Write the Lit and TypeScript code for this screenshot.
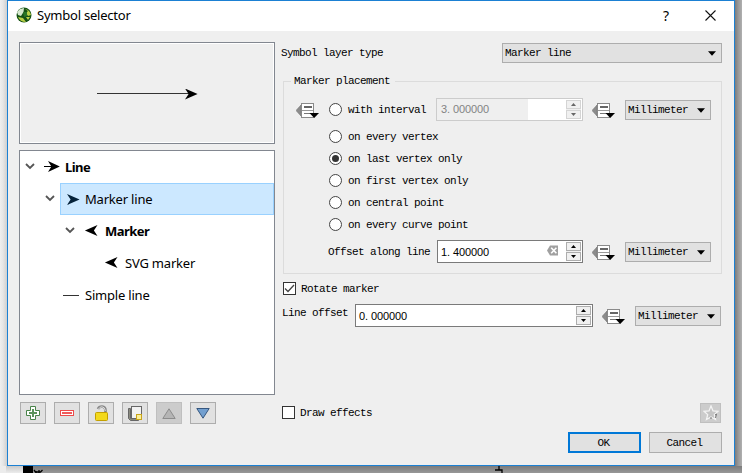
import { LitElement, html, css, svg } from "lit";
import { customElement } from "lit/decorators.js";

const arrowRight = svg`<path d="M0 0L12.6 5.5L0 11L3.6 5.5Z"/>`;
const overrideIcon = html`<svg class="ov" width="23" height="17" viewBox="0 0 23 17">
  <path d="M0 8.5L5 3V14Z" fill="#8c8c8c" stroke="#777" stroke-width=".6"/>
  <rect x="5.5" y="1.5" width="12" height="14" fill="#fff" stroke="#8a8a8a"/>
  <path d="M8 5h8" stroke="#666" stroke-width="2"/><path d="M6 8.5h11" stroke="#999"/><path d="M8 11.5h8" stroke="#777"/>
  <path d="M13.5 11H23L18.2 16Z" fill="#000"/></svg>`;
const caret = html`<svg class="caret" width="8" height="5" viewBox="0 0 8 5"><path d="M0 .3H8L4 4.7Z"/></svg>`;
const chevron = html`<svg class="chev" width="10" height="7" viewBox="0 0 10 7"><path d="M1 1L5 5L9 1" fill="none" stroke="#555" stroke-width="1.8"/></svg>`;
const unit = html`<div class="combo unit"><span>Millimeter</span>${caret}</div>`;
const spin = (value: string, cls: string, clear = false) => {
  const [whole, fraction] = value.split(".");
  return html`<div class="spin ${cls}">
  <span class="num">${whole}<span class="dot">.</span>${fraction}</span><span class="fill"></span>
  ${clear ? html`<svg class="clear" width="12" height="11" viewBox="0 0 12 11"><path d="M0 5.5L3 .5H11V10.5H3Z" fill="#a0a0a0"/><path d="M4.2 2.7L9.4 8.2M9.4 2.7L4.2 8.2" stroke="#fff" stroke-width="1.6"/></svg>` : ""}
  <span class="steps"><i><svg width="5" height="3"><path d="M0 3H5L2.5 0Z"/></svg></i><i><svg width="5" height="3"><path d="M0 0H5L2.5 3Z"/></svg></i></span></div>`;
};

@customElement("app-root")
export class AppRoot extends LitElement {
  static styles = css`
    :host { display: block; width: 742px; height: 473px; overflow: hidden; position: relative;
      background: linear-gradient(90deg, #efefef, #e6e6e6 3px, #cfcfcf 7px, #999 8px); font: 11px "Liberation Mono", monospace; color: #000; }
    * { box-sizing: border-box; }
    svg { display: block; flex: none; }
    .map { position: absolute; left: 0; top: 0; }
    .window { position: absolute; left: 7px; top: 0; width: 728px; height: 466px; border: 1px solid #1b80d3;
      background: #efefef; display: flex; flex-direction: column; }
    .title { height: 30px; background: #fff; display: flex; align-items: center; padding: 0 18px 2px 8px; flex: none;
      font: 13px "Noto Sans", sans-serif; }
    .title .name { margin-left: 5px; flex: 1; letter-spacing: -.22px; }
    .title .help { font-size: 14px; margin-right: 36px; }
    .body { flex: 1; display: flex; padding: 11px 12px 0 11px; }
    .left { width: 256px; flex: none; }
    .preview { height: 102px; border: 1px solid #828790; outline: 1px solid #fff; outline-offset: -2px; padding: 46px 0 0 77px; }
    .tree { height: 245px; margin-top: 6px; border: 1px solid #828790; background: #fff; font: 13px "Noto Sans", sans-serif; }
    .node { height: 32px; display: flex; align-items: center; }
    .node b, .node .n { white-space: nowrap; letter-spacing: -.2px; }
    .node b { letter-spacing: -.55px; }
    .chev { margin: 0 9px 0 5px; position: relative; top: -1px; }
    .node .glyph { margin-right: 5px; }
    .d1 { padding-left: 20px; } .d2 { padding-left: 40px; } .d3 { padding-left: 80px; } .ds { padding-left: 43px; }
    .item { height: 32px; flex: 1; display: flex; align-items: center; }
    .sel { background: #cce8ff; border: 1px solid #99d1ff; padding-left: 6px; margin-left: -4px; }
    .tools { display: flex; gap: 8px; margin: 7px 0 0 1px; }
    .tool { width: 26px; height: 22px; border: 1px solid #adadad; background: #e1e1e1; display: flex; align-items: center; justify-content: center; }
    .off { background: #ccc; border-color: #bfbfbf; }
    .right { flex: 1; margin-left: 6px; display: flex; flex-direction: column; }
    .t, .combo span, .legend { letter-spacing: -.6px; white-space: nowrap; }
    .row { display: flex; align-items: center; flex: none; }
    .combo { height: 20px; border: 1px solid #adadad; background: #e1e1e1; display: flex; align-items: center; justify-content: space-between; padding: 0 5px 0 2px; flex: none; }
    .type { height: 22px; justify-content: space-between; }
    .type .combo { width: 220px; }
    .unit { width: 86px; }
    .group { border: 1px solid #dcdcdc; height: 193px; width: 439px; margin: 17px 0 0 2px; flex: none; position: relative; padding: 16px 10px 0 12px; }
    .legend { position: absolute; left: 7px; top: -8px; background: #efefef; padding: 0 5px 0 3px; line-height: 15px; }
    .interval { height: 24px; }
    .ov { margin-right: 10px; }
    .radio { width: 13px; height: 13px; border: 1px solid #444; border-radius: 50%; background: #fff; display: grid; place-items: center; flex: none; margin: 0 6px 1px 0; }
    .radio.on::after { content: ""; width: 7px; height: 7px; border-radius: 50%; background: #333; }
    .opt { height: 22px; padding-left: 33px; }
    .opts { margin-top: 4px; }
    .spin { height: 23px; border: 1px solid #7a7a7a; background: #fff; display: flex; align-items: center; align-self: flex-start; flex: none; margin-right: 9px; padding: 1px; }
    .num { font: 11px "Liberation Sans", sans-serif; padding-left: 2px; white-space: nowrap; letter-spacing: -.12px; }
    .dot { letter-spacing: 2.9px; }
    .fill { flex: 1; }
    .clear { margin-right: 7px; position: relative; top: -1px; }
    .steps { width: 15px; height: 19px; display: flex; flex-direction: column; background: #efefef; gap: 1px; }
    .steps i { flex: 1; border: 1px solid #adadad; display: grid; place-items: center; background: #f0f0f0; }
    .w1 { width: 147px; border-color: #ccc; color: #838383; }
    .w1 .num { background: #efefef; height: 21px; line-height: 21px; width: 91px; margin-left: -1px; padding-left: 4px; }
    .w1 svg { fill: #666; } .w1 .steps i { border-color: #d4d4d4; }
    .w2 { width: 146px; } .w3 { width: 238px; }
    .offset { margin-top: 4px; padding-left: 32px; height: 24px; }
    .check { width: 13px; height: 13px; border: 1px solid #333; background: #fff; margin: 0 5px 1px 0; flex: none; }
    .rotate { height: 15px; margin: 7px 0 0 2px; }
    .line { height: 24px; margin: 8px 0 0 1px; }
    .line .t { width: 73px; position: relative; top: -3px; }
    .foot { height: 20px; margin-top: 75px; justify-content: space-between; }
    .foot .row { padding-left: 1px; }
    .star { width: 21px; height: 20px; background: #ccc; border: 1px solid #bfbfbf; display: grid; place-items: center; margin-right: 1px; }
    .btns { justify-content: flex-end; gap: 8px; margin-top: 9px; }
    .btn { width: 73px; height: 21px; border: 1px solid #adadad; background: #e1e1e1; display: grid; place-items: center; padding-right: 2px; }
    .ok { border: 2px solid #0078d7; }
  `;

  render() {
    const opt = (label: string, on = false) => html`<div class="row opt"><span class="radio ${on ? "on" : ""}"></span><span class="t">${label}</span></div>`;
    return html`
      <svg class="map" width="742" height="473">
        <defs>
          <linearGradient id="g"><stop offset="0" stop-color="#7c7c7c"/><stop offset=".5" stop-color="#999"/><stop offset="1" stop-color="#b0b0b0"/></linearGradient>
          <linearGradient id="b" x2="0" y2="1"><stop offset="0" stop-color="#7c7c7c"/><stop offset="1" stop-color="#989898"/></linearGradient>
          <linearGradient id="w" x2="0" y2="1"><stop offset="0" stop-color="#cacaca"/><stop offset="1" stop-color="#ececec"/></linearGradient>
        </defs>
        <rect x="735" width="7" height="473" fill="url(#g)"/>
        <rect x="6" y="466" width="17" height="7" fill="url(#w)"/>
        <rect y="466" width="6" height="7" fill="#ececec"/>
        <rect x="23" y="466" width="719" height="7" fill="url(#b)"/>
        <rect x="23" y="466" width="10" height="7"/>
        <path d="M34 470l1.500 2h5l2-2M36 471v2M39 470v3M499 466v4h3v3M495 470h4" stroke="#000" stroke-width="1.3" fill="none"/>
      </svg>
      <div class="window">
        <div class="title">
          <svg width="16" height="16" viewBox="0 0 16 16"><circle cx="8" cy="8" r="7.5" fill="#145214"/><path d="M4 2L8 1L7.500 5L5 9L2 8L1 5Z" fill="#d6e8cf"/><path d="M9 2Q14 3 15 8L12 9L10 6L12 4ZM2 10L7 11L10 15Q4 15 2 10ZM10 10L14 10L12 13Z" fill="#b9cf45"/><path d="M7 5h4v4l-3 1z" fill="#277426"/></svg>
          <span class="name">Symbol selector</span><span class="help">?</span>
          <svg width="11" height="11" viewBox="0 0 11 11"><path d="M.5 .5L10.5 10.5M10.5 .5L.5 10.5" stroke="#111" stroke-width="1.1"/></svg>
        </div>
        <div class="body">
          <div class="left">
            <div class="preview"><svg width="102" height="11" viewBox="0 0 102 11"><path d="M0 4.500H92" stroke="#333"/><g transform="translate(88 -.5)">${arrowRight}</g></svg></div>
            <div class="tree">
              <div class="node">${chevron}<svg class="glyph" width="16" height="12" viewBox="0 0 16 12"><path d="M0 5.500H8" stroke="#000"/><g transform="translate(4 0)scale(.94 1)">${arrowRight}</g></svg><b>Line</b></div>
              <div class="node d1">${chevron}<div class="item sel"><svg class="glyph" width="13" height="11" fill="#06233a">${arrowRight}</svg><span class="n">Marker line</span></div></div>
              <div class="node d2">${chevron}<svg class="glyph" width="16" height="12" viewBox="0 0 16 12"><g transform="translate(13.500 0)scale(-1 1)">${arrowRight}</g></svg><b>Marker</b></div>
              <div class="node d3"><svg class="glyph" width="20" height="12" viewBox="0 0 20 12"><g transform="translate(17.500 0)scale(-1 1)">${arrowRight}</g></svg><span class="n">SVG marker</span></div>
              <div class="node ds"><svg class="glyph" width="17" height="3"><path d="M0 1.500H16" stroke="#333"/></svg><span class="n">Simple line</span></div>
            </div>
            <div class="tools">
              <div class="tool"><svg width="14" height="14" viewBox="0 0 14 14"><path d="M4.500 .5h5v4h4v5h-4v4h-5v-4h-4v-5h4z" fill="#fff" stroke="#498349"/><path d="M7 3v8M3 7h8" stroke="#5a925a" stroke-width="2"/></svg></div>
              <div class="tool"><svg width="14" height="6" viewBox="0 0 14 6"><rect x=".5" y=".5" width="13" height="5" fill="#fff" stroke="#ed4c4c"/><path d="M2 3h10" stroke="#f05b5b" stroke-width="2"/></svg></div>
              <div class="tool"><svg width="13" height="16" viewBox="0 0 13 16"><path d="M3 4Q4 1.500 7 1.500Q10.500 2 10.500 5V8" fill="none" stroke="#888" stroke-width="2.6"/><path d="M3.500 4Q5 1.700 7 1.800Q10 2 10.400 6" fill="none" stroke="#ddd"/><rect x=".5" y="7.500" width="12" height="8" rx="1" fill="#f3d91d" stroke="#c4a000"/></svg></div>
              <div class="tool"><svg width="14" height="15" viewBox="0 0 14 15"><path d="M.5 2.500h2v10h8v2h-8l-2-2z" fill="#8b8b80" stroke="#666"/><rect x="3.500" y=".5" width="10" height="12" fill="#f2f2f2" stroke="#666"/><rect x="8.500" y="8.500" width="5" height="5" fill="#fbef99" stroke="#c9a51b"/></svg></div>
              <div class="tool off"><svg width="14" height="11" viewBox="0 0 14 11"><path d="M7 .8L13.200 10.500H.8Z" fill="#b5b5b5" stroke="#8c8c8c"/></svg></div>
              <div class="tool"><svg width="14" height="11" viewBox="0 0 14 11"><path d="M.8 .5H13.200L7 10.200Z" fill="#729fcf" stroke="#36577f"/></svg></div>
            </div>
          </div>
          <div class="right">
            <div class="row type"><span class="t">Symbol layer type</span><div class="combo"><span>Marker line</span>${caret}</div></div>
            <div class="group">
              <span class="legend">Marker placement</span>
              <div class="row interval">${overrideIcon}<span class="radio"></span><span class="t">with interval</span><span class="fill"></span>${spin("3.000000", "w1")}${overrideIcon}${unit}</div>
              <div class="opts">${opt("on every vertex")}${opt("on last vertex only", true)}${opt("on first vertex only")}${opt("on central point")}${opt("on every curve point")}</div>
              <div class="row offset"><span class="t">Offset along line</span><span class="fill"></span>${spin("1.400000", "w2", true)}${overrideIcon}${unit}</div>
            </div>
            <div class="row rotate"><span class="check"><svg width="11" height="11"><path d="M1 5.500L4 8.500L10 2" fill="none" stroke="#444" stroke-width="1.3"/></svg></span><span class="t">Rotate marker</span></div>
            <div class="row line"><span class="t">Line offset</span>${spin("0.000000", "w3")}${overrideIcon}${unit}</div>
            <div class="row foot"><div class="row"><span class="check"></span><span class="t">Draw effects</span></div>
              <div class="star"><svg width="16" height="16" viewBox="0 0 16 16"><path d="M8 1L10 6L15 6.300L11.300 9.600L12.500 14.500L8 12L3.500 14.500L4.700 9.600L1 6.300L6 6Z" fill="#c4c4c4" stroke="#f4f4f4" stroke-width="1.3"/><path d="M8 12v2M12 10l1.500-1-1 4" stroke="#777" fill="none"/></svg></div></div>
            <div class="row btns"><div class="btn ok"><span class="t">OK</span></div><div class="btn"><span class="t">Cancel</span></div></div>
          </div>
        </div>
      </div>`;
  }
}
